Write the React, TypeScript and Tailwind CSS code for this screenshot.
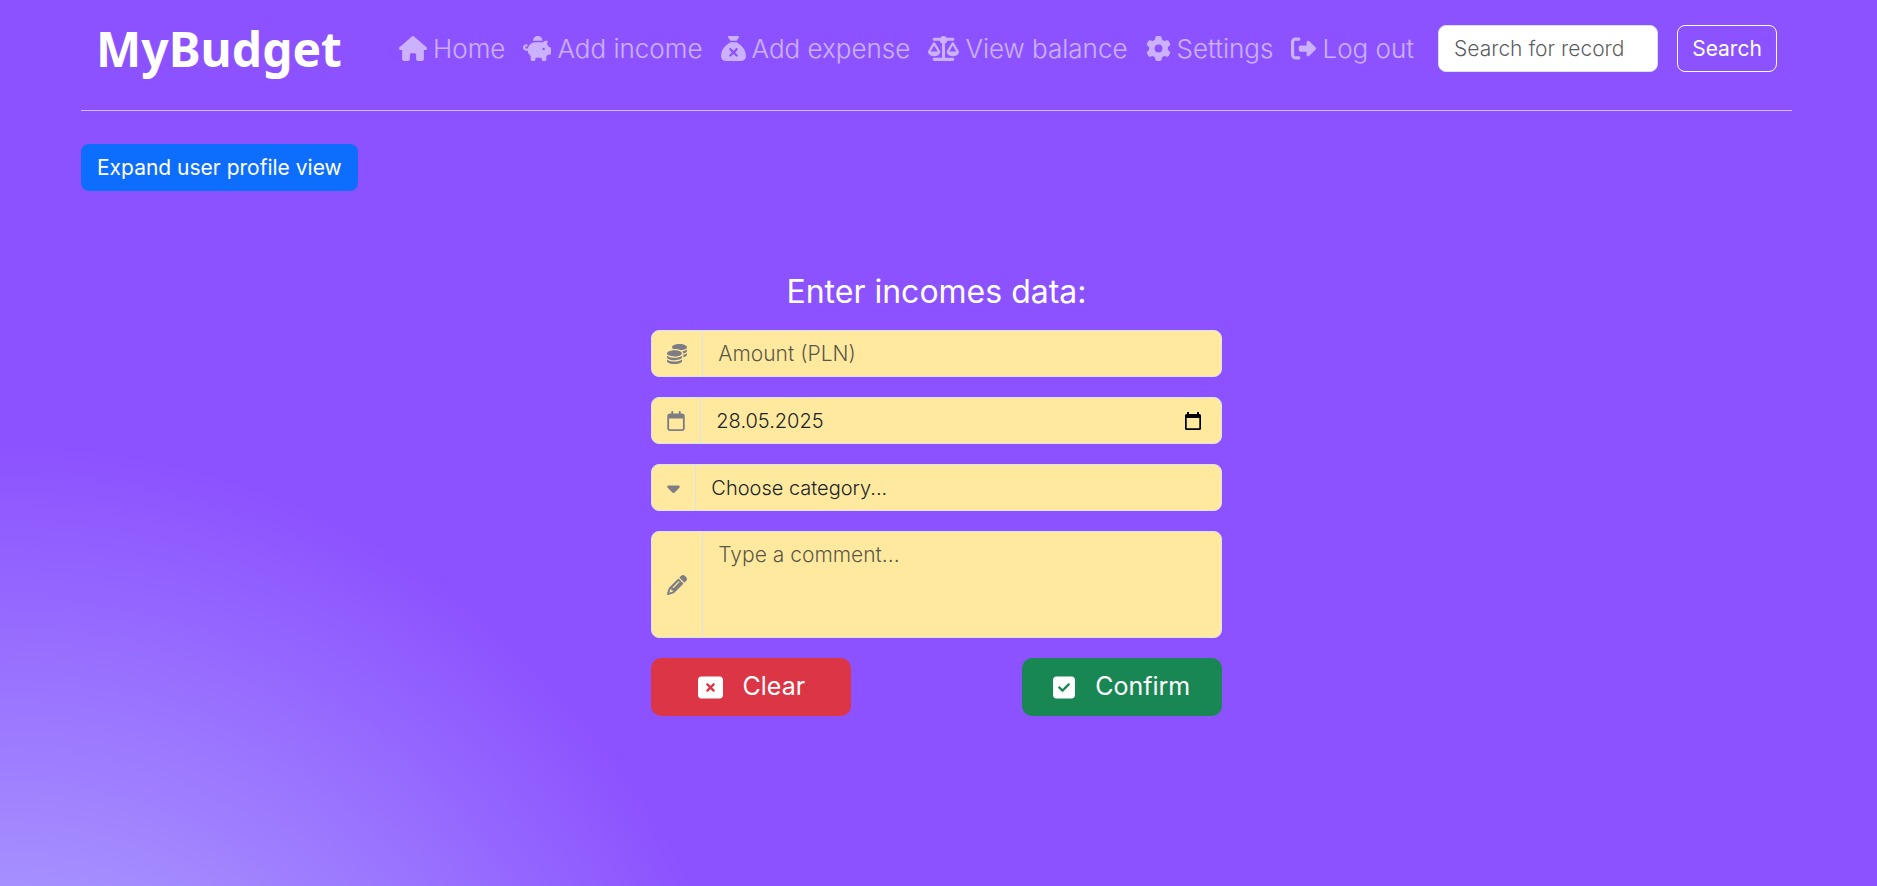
import { useState } from "react";
import type { ReactNode } from "react";
import {
  FaCaretDown,
  FaCoins,
  FaGear,
  FaHouse,
  FaPencil,
  FaPiggyBank,
  FaRectangleXmark,
  FaRegCalendar,
  FaRightFromBracket,
  FaSackXmark,
  FaScaleBalanced,
  FaSquareCheck,
} from "react-icons/fa6";

const navLinks = [
  { label: "Home", icon: FaHouse, iconWidth: "w-[28px]" },
  { label: "Add income", icon: FaPiggyBank, iconWidth: "w-[28px]" },
  { label: "Add expense", icon: FaSackXmark, iconWidth: "w-[25px]" },
  { label: "View balance", icon: FaScaleBalanced, iconWidth: "w-[31px]" },
  { label: "Settings", icon: FaGear, iconWidth: "w-[25px]" },
  { label: "Log out", icon: FaRightFromBracket, iconWidth: "w-[25px]" },
];

const categories = ["Salary", "Interest", "Allegro sale", "Another"];

function Navbar() {
  return (
    <header className="flex items-center border-b border-white/60 px-[15px] pt-[25px] pb-[38px]">
      <a href="#" className="w-[303px] shrink-0 font-['Noto_Sans'] text-[48px] leading-[47px] font-bold">
        MyBudget
      </a>
      <nav className="flex flex-1 items-center justify-between text-white/55">
        {navLinks.map(({ label, icon: Icon, iconWidth }) => (
          <a
            key={label}
            href="#"
            className="flex items-center gap-[6px] text-[26px] leading-[38px] font-light whitespace-nowrap hover:text-white/75"
          >
            <Icon className={`h-[25px] ${iconWidth}`} />
            {label}
          </a>
        ))}
      </nav>
      <form className="ml-6 flex shrink-0 gap-[19px]" onSubmit={(e) => e.preventDefault()}>
        <input
          type="search"
          aria-label="Search for record"
          placeholder="Search for record"
          className="h-[47px] w-[220px] rounded-lg border border-[#dee2e6] bg-white px-[15px] text-[21px] font-light text-[#212529] outline-none placeholder:text-[#212529]/75"
        />
        <button type="submit" className="h-[47px] w-[100px] rounded-lg border border-white text-[21px]">
          Search
        </button>
      </form>
    </header>
  );
}

interface InputGroupProps {
  id: string;
  label: string;
  icon: ReactNode;
  children: ReactNode;
}

function InputGroup({ id, label, icon, children }: InputGroupProps) {
  return (
    <div className="flex overflow-hidden rounded-lg border border-[#dee2e6] bg-[#ffe99e] text-[#212529]">
      <label
        htmlFor={id}
        aria-label={label}
        className="flex shrink-0 items-center border-r border-[#dee2e6] px-[15px] text-[#7f7d84]"
      >
        {icon}
      </label>
      {children}
    </div>
  );
}

// same glyph as the native date picker indicator
function PickerIcon() {
  return (
    <svg viewBox="0 0 16 18" className="h-[18px] w-4" fill="currentColor">
      <path d="M2 0h2v2h8V0h2v2h.5A1.5 1.5 0 0 1 16 3.500V16.500A1.500 1.500 0 0 1 14.500 18h-13A1.500 1.500 0 0 1 0 16.500V3.500A1.500 1.500 0 0 1 1.500 2H2zM1.700 6v10.300h12.600V6z" />
    </svg>
  );
}

export default function App() {
  const [date, setDate] = useState("28.05.2025");
  const [category, setCategory] = useState("");

  const handleReset = () => {
    setDate("28.05.2025");
    setCategory("");
  };

  return (
    <div className="min-h-screen bg-[#8c52ff] bg-[radial-gradient(circle_760px_at_0_136%,#b8bcff,#8c52ff)] pr-[85px] pl-[81px] font-[Inter,sans-serif] text-white">
      <Navbar />

      <button type="button" className="mt-[33px] h-[47px] rounded-lg bg-[#0d6efd] px-4 text-[21px]">
        Expand user profile view
      </button>

      <main className="mx-auto mt-[81px] w-1/3">
        <h1 className="text-center text-[32px] leading-10">Enter incomes data:</h1>
        <form
          className="mt-[18px] flex flex-col gap-5"
          onSubmit={(e) => e.preventDefault()}
          onReset={handleReset}
        >
          <InputGroup id="amount" label="Amount" icon={<FaCoins className="size-5" />}>
            <input
              id="amount"
              type="text"
              placeholder="Amount (PLN)"
              className="h-[45px] min-w-0 flex-1 px-[15px] text-[21px] font-light outline-none placeholder:text-[#212529]/75"
            />
          </InputGroup>

          <InputGroup id="date" label="Date" icon={<FaRegCalendar className="h-5 w-[18px]" />}>
            <input
              id="date"
              type="text"
              value={date}
              onChange={(e) => setDate(e.target.value)}
              className="h-[45px] min-w-0 flex-1 px-[15px] text-[20px] font-light outline-none"
            />
            <button type="button" aria-label="Open calendar" className="px-5 text-black">
              <PickerIcon />
            </button>
          </InputGroup>

          <InputGroup id="category" label="Category" icon={<FaCaretDown className="h-5 w-[13px]" />}>
            <select
              id="category"
              value={category}
              onChange={(e) => setCategory(e.target.value)}
              className="h-[45px] min-w-0 flex-1 appearance-none px-[15px] text-[20px] font-light outline-none"
            >
              <option value="">Choose category...</option>
              {categories.map((name) => (
                <option key={name} value={name}>
                  {name}
                </option>
              ))}
            </select>
          </InputGroup>

          <InputGroup id="comment" label="Comment" icon={<FaPencil className="size-5" />}>
            <textarea
              id="comment"
              placeholder="Type a comment..."
              className="h-[105px] min-w-0 flex-1 resize-none px-[15px] py-2 text-[21px] leading-[30px] font-light outline-none placeholder:text-[#212529]/75"
            />
          </InputGroup>

          <div className="flex justify-between">
            <button
              type="reset"
              className="flex h-[58px] w-[200px] items-center justify-center gap-5 rounded-[10px] bg-[#dc3545] text-[25px]"
            >
              <FaRectangleXmark className="size-[25px]" />
              Clear
            </button>
            <button
              type="submit"
              className="flex h-[58px] w-[200px] items-center justify-center gap-5 rounded-[10px] bg-[#198754] text-[25px]"
            >
              <FaSquareCheck className="h-[25px] w-[22px]" />
              Confirm
            </button>
          </div>
        </form>
      </main>
    </div>
  );
}
